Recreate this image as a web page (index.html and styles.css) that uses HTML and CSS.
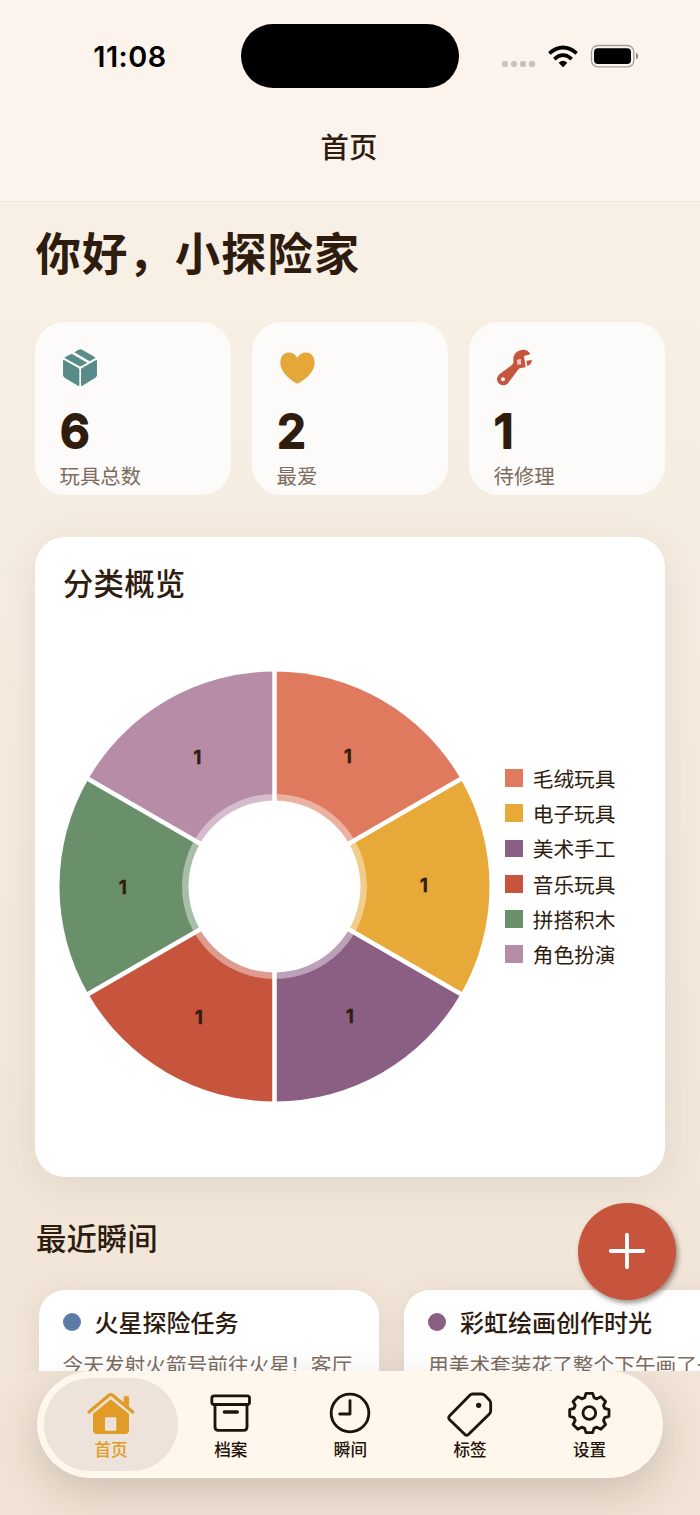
FILE: index.html
```html
<!DOCTYPE html>
<html lang="zh-CN">
<head>
<meta charset="utf-8">
<title>首页</title>
<link rel="stylesheet" href="styles.css">
</head>
<body>
<div class="screen">
  <header class="header">
    <div class="status">
      <span class="time">11:08</span>
      <span class="island"></span>
      <span class="signals">
        <span class="dots"><i></i><i></i><i></i><i></i></span>
        <svg class="wifi" viewBox="595 135 90 68"><g fill="none" stroke="#000" stroke-width="11"><path d="M599 160Q640 125 681 160"/><path d="M614 177Q640 154 666 177"/></g><path d="M627 188Q640 177 653 188L642 200Q640 202 638 200Z"/></svg>
        <svg class="battery" viewBox="720 133 146 72"><rect x="724.500" y="137.500" width="127" height="64" rx="19" fill="none" stroke="#a39d99" stroke-width="4"/><rect x="732" y="146" width="111" height="47" rx="12"/><path d="M858 159Q865 162 865 169T858 179Z" fill="#8d8884"/></svg>
      </span>
    </div>
    <div class="title">首页</div>
  </header>
  <main class="content">
    <h1 class="greeting">你好，小探险家</h1>
    <section class="stats">
      <div class="stat">
        <svg class="stat-icon" viewBox="120 110 120 120" fill="#588c8a"><path d="M163 126L174 119Q181 115 188 119L224 140Q227 142 225 144L209 153Z"/><path d="M155 130L202 157L186 166Q181 169 176 166L135 144Q132 142 136 140Z"/><path d="M129 151Q129 148 132 149L175 173Q178 175 178 178V224Q178 228 174 226L135 203Q129 199 129 193Z"/><path d="M231 151Q231 148 228 149L186 173Q183 175 183 178V224Q183 228 187 226L225 203Q231 199 231 193Z"/></svg>
        <svg class="num" viewBox="0 0 60 50"><text x="0" y="40.500">6</text></svg>
        <div class="label">玩具总数</div>
      </div>
      <div class="stat">
        <svg class="stat-icon" viewBox="770 110 120 120" fill="#e5a737"><path d="M831 142C818 119 780 120 780 158C780 184 808 207 828 219Q831 221 834 219C855 207 883 184 883 158C883 120 843 119 831 142Z"/></svg>
        <svg class="num" viewBox="0 0 60 50"><text x="0" y="40.500">2</text></svg>
        <div class="label">最爱</div>
      </div>
      <div class="stat">
        <svg class="stat-icon" viewBox="432 110 120 120" fill="#c7553e"><path fill-rule="evenodd" d="M490 158V146C490 119 530 107 541 132L522 137L527 171L509 174Q505 177 502 181L475 217C463 233 439 223 441 204Q441 198 449 191L482 167Q488 163 490 158ZM465 207A6 6 0 1 0 453 207A6 6 0 1 0 465 207Z"/><path d="M529 151L546 149Q545 161 532 168Z"/><path d="M501 149L512 146L514 161L503 163Z" fill="#fdfbf9"/><path d="M503 153L512 151M504 159L513 156" stroke="#c7553e" stroke-width="2"/></svg>
        <svg class="num" viewBox="0 0 60 50"><text x="0" y="40.500">1</text></svg>
        <div class="label">待修理</div>
      </div>
    </section>
    <section class="overview">
      <h2>分类概览</h2>
      <div class="chart-row">
        <svg class="donut" viewBox="-216.500 -215.500 432 432">
          <path fill="#df7a5e" d="M0 0V-215A215 215 0 0 1 186.200 -107.500Z"/>
          <path fill="#e7a938" d="M0 0L186.200 -107.500A215 215 0 0 1 186.200 107.500Z"/>
          <path fill="#8b5e83" d="M0 0L186.200 107.500A215 215 0 0 1 0 215Z"/>
          <path fill="#c7553e" d="M0 0V215A215 215 0 0 1 -186.200 107.500Z"/>
          <path fill="#6a8f6b" d="M0 0L-186.200 107.500A215 215 0 0 1 -186.200 -107.500Z"/>
          <path fill="#b78ca7" d="M0 0L-186.200 -107.500A215 215 0 0 1 0 -215Z"/>
          <circle r="92.500" fill="#fff" fill-opacity=".42"/>
          <path d="M0 -217V217M-188 -108.500L188 108.500M-188 108.500L188 -108.500" stroke="#fff" stroke-width="4.500"/>
          <circle r="86" fill="#fff"/>
          <g class="slice-label"><text x="73.500" y="-123.500">1</text><text x="149.500" y="5.500">1</text><text x="75.500" y="136.500">1</text><text x="-75.500" y="137.500">1</text><text x="-151.500" y="7.500">1</text><text x="-77" y="-122.500">1</text></g>
        </svg>
        <ul class="legend">
          <li><i class="plush"></i>毛绒玩具</li>
          <li><i class="electric"></i>电子玩具</li>
          <li><i class="art"></i>美术手工</li>
          <li><i class="music"></i>音乐玩具</li>
          <li><i class="blocks"></i>拼搭积木</li>
          <li><i class="role"></i>角色扮演</li>
        </ul>
      </div>
    </section>
    <h2 class="recent-title">最近瞬间</h2>
    <section class="moments">
      <article class="moment"><h3><i class="blue"></i>火星探险任务</h3><p>今天发射火箭号前往火星！客厅</p></article>
      <article class="moment"><h3><i class="art"></i>彩虹绘画创作时光</h3><p>用美术套装花了整个下午画了一幅彩虹</p></article>
    </section>
  </main>
  <nav class="tabs">
    <a class="tab active"><svg viewBox="198 82 150 150" fill="#e09c27"><path fill-rule="evenodd" d="M219 159L272 116L327 159V209Q327 220 316 220H230Q219 220 219 209ZM258 170Q255 170 255 173V207Q255 210 258 210H286Q289 210 289 207V173Q289 170 286 170Z"/><path d="M207 154L267 104Q272 100 278 104L338 154" fill="none" stroke="#ede3da" stroke-width="22"/><path d="M207 154L267 104Q272 100 278 104L338 154" fill="none" stroke="#e09c27" stroke-width="10" stroke-linecap="round"/><path d="M311 126V111Q311 107 315 107H323Q327 107 327 111V140Z"/></svg><span>首页</span></a>
    <a class="tab"><svg viewBox="556 82 150 150" class="line"><rect x="573.500" y="105.500" width="113" height="26" rx="7"/><path d="M583 132V199Q583 209 593 209H669Q679 209 679 199V132"/><path d="M611 154H650" stroke-width="10"/></svg><span>档案</span></a>
    <a class="tab"><svg viewBox="915 82 150 150" class="line"><circle cx="990" cy="157" r="56.500"/><path d="M990 120V160H959"/></svg><span>瞬间</span></a>
    <a class="tab"><svg viewBox="285 82 150 150" class="line"><path d="M369 100H394Q400 100 404 104L418 118Q422 122 422 128V150Q422 156 418 160L356 221Q350 227 344 221L299 177Q293 171 299 165L358 105Q363 100 369 100Z"/><circle cx="386" cy="134" r="8" fill="#1f1409" stroke="none"/></svg><span>标签</span></a>
    <a class="tab"><svg viewBox="-73 -75 150 150" class="line"><path d="M-14 -46L-10 -59H10L14 -46L22.600 -42.400L34.600 -48.800L48.800 -34.600L42.400 -22.600L46 -14L59 -10V10L46 14L42.400 22.600L48.800 34.600L34.600 48.800L22.600 42.400L14 46L10 59H-10L-14 46L-22.600 42.400L-34.600 48.800L-48.800 34.600L-42.400 22.600L-46 14L-59 10V-10L-46 -14L-42.400 -22.600L-48.800 -34.600L-34.600 -48.800L-22.600 -42.400Z"/><circle r="19"/></svg><span>设置</span></a>
  </nav>
  <button class="fab" aria-label="添加"><svg viewBox="0 0 36 36"><path d="M18 1.800V34.200M1.800 18H34.200"/></svg></button>
</div>
</body>
</html>
```
FILE: styles.css
```css
* { box-sizing: border-box; }
body, h1, h2, h3, p, ul { margin: 0; padding: 0; }
body { font-family: "Noto Sans CJK SC", sans-serif; color: #2e1c0f; }
svg { display: block; }
i { display: block; flex: none; }

.screen { position: relative; width: 700px; height: 1515px; overflow: hidden; background: linear-gradient(180deg, #faf2ea 0%, #f7eee3 25%, #f2e7da 75%, #f0e3d5 100%); }

.header { height: 202px; background: #fbf3ec; border-bottom: 1px solid #efe6de; }
.status { display: grid; grid-template-columns: 241px 218px 241px; height: 112px; padding-top: 24px; }
.time { height: 64px; padding-left: 19px; text-align: center; font: 600 28.800px/66px Inter, sans-serif; letter-spacing: .5px; color: #000; }
.island { height: 64px; border-radius: 32px; background: #000; }
.signals { display: flex; align-items: flex-start; padding: 20px 0 0 42.500px; }
.dots { display: flex; gap: 3.300px; padding-top: 17px; }
.dots i { width: 6px; height: 6px; border-radius: 2px; background: #c9c3be; }
.wifi { width: 30px; height: 22.700px; margin: 1px 0 0 12.600px; }
.battery { width: 48.700px; height: 24px; margin-left: 11.700px; }
.title { height: 70px; padding-right: 2px; text-align: center; font-size: 28.400px; line-height: 68px; font-weight: 500; }

.content { height: 1169px; overflow: hidden; }
.greeting { padding: 19px 0 0 35.500px; font-size: 45.400px; line-height: 60px; font-weight: 700; letter-spacing: 1px; white-space: nowrap; }
.stats { display: grid; grid-template-columns: repeat(3, 196px); gap: 21px; padding: 41px 35px 0; }
.stat { height: 173px; padding: 24.700px 24.500px 0; border-radius: 30px; background: #fdfbf9; }
.stat-icon { width: 40px; height: 40px; }
.num { width: 60px; height: 50px; margin-top: 20px; overflow: visible; font: 600 46.500px Inter, sans-serif; fill: #2e1c0f; stroke: #2e1c0f; stroke-width: 1.800px; stroke-linejoin: round; }
.label { margin-top: 4px; font-size: 20.400px; line-height: 28px; color: #7c6c5f; }

.overview { height: 640px; margin: 42px 35px 0; padding: 25px 0 0 23px; border-radius: 30px; background: #fff; box-shadow: 0 8px 40px rgba(90, 70, 45, .1); }
h2 { font-size: 30.400px; line-height: 40px; font-weight: 500; }
.overview h2 { padding-left: 5px; letter-spacing: .2px; }
.chart-row { display: flex; align-items: flex-start; padding-top: 68.500px; }
.donut { width: 432px; height: 432px; overflow: visible; }
.slice-label { font: 600 18.500px Inter, sans-serif; fill: #2e1c0f; stroke: #2e1c0f; stroke-width: .7px; stroke-linejoin: round; text-anchor: middle; }
.legend { list-style: none; padding: 90px 0 0 15px; }
.legend li { display: flex; align-items: center; gap: 10px; height: 35.200px; font-size: 20.700px; }
.legend i { width: 17.700px; height: 17.700px; }
.plush { background: #df7a5e; }
.electric { background: #e7a938; }
.art { background: #8b5e83; }
.music { background: #c7553e; }
.blocks { background: #6a8f6b; }
.role { background: #b78ca7; }
.blue { background: #5b7ca8; }

.recent-title { margin: 40px 0 0 36px; }
.moments { display: flex; gap: 25px; padding: 32.500px 0 0 38.500px; }
.moment { flex: none; width: 340.500px; height: 180px; padding: 13px 24px; overflow: hidden; border-radius: 26px; background: #fff; box-shadow: 0 6px 28px rgba(90, 70, 45, .1); white-space: nowrap; }
.moment h3 { display: flex; align-items: center; gap: 14px; height: 38px; font-size: 24px; font-weight: 500; }
.moment h3 i { width: 18px; height: 18px; margin-top: 1px; border-radius: 50%; }
.moment p { margin-top: 8px; font-size: 20.700px; line-height: 30px; color: #7c6c5f; }

.tabs { position: absolute; left: 37px; top: 1371px; display: grid; grid-template-columns: 134px repeat(4, 119.600px); width: 626px; height: 107px; padding: 6px; border: 1px solid #fffaf1; border-radius: 53.500px; background: #fff6ec; box-shadow: 0 14px 42px rgba(75, 55, 35, .2); }
.tab { display: flex; flex-direction: column; align-items: center; height: 93px; padding-top: 9.500px; border-radius: 46.500px; color: #1f1409; }
.tab:not(.active) { margin-left: -7px; margin-right: 7px; }
.tab.active { background: #ede3da; color: #e09c27; }
.tab svg { width: 50px; height: 50px; }
.tab span { font-size: 16.600px; line-height: 23px; font-weight: 500; }
.line { fill: none; stroke: #1f1409; stroke-width: 8.500px; stroke-linecap: round; stroke-linejoin: round; }

.fab { position: absolute; left: 578px; top: 1202.500px; display: grid; place-items: center; width: 97.500px; height: 97.500px; padding: 0; border: 0; border-radius: 50%; background: #c7553e; box-shadow: 2px 3px 5px rgba(60, 40, 30, .5); }
.fab svg { width: 36px; height: 36px; fill: none; stroke: #fff; stroke-width: 3.800px; stroke-linecap: round; }
```
